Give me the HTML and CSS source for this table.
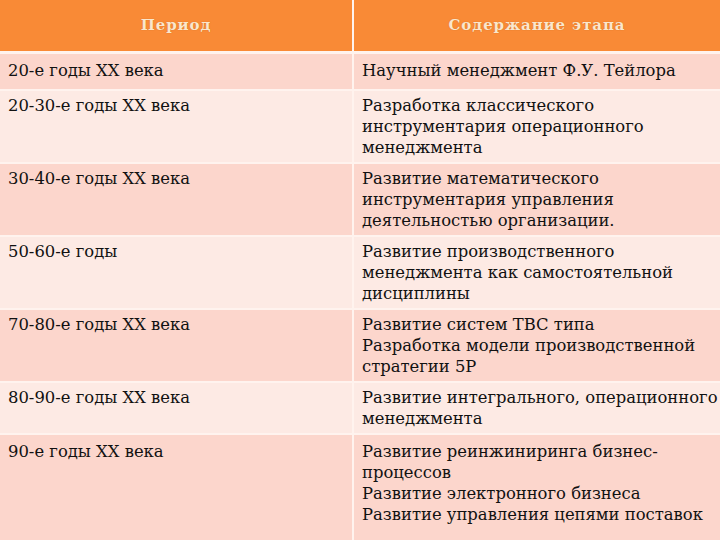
FILE: index.html
```html
<!DOCTYPE html>
<html>
<head>
<meta charset="utf-8">
<link rel="stylesheet" href="styles.css">
</head>
<body>
<div class="table">
  <div class="head">Период</div>
  <div class="head">Содержание этапа</div>

  <div class="cell odd short">20-е годы XX века</div>
  <div class="cell odd short">Научный менеджмент Ф.У. Тейлора</div>

  <div class="cell even">20-30-е годы XX века</div>
  <div class="cell even">Разработка классического<br>инструментария операционного<br>менеджмента</div>

  <div class="cell odd">30-40-е годы XX века</div>
  <div class="cell odd">Развитие математического<br>инструментария управления<br>деятельностью организации.</div>

  <div class="cell even">50-60-е годы</div>
  <div class="cell even">Развитие производственного<br>менеджмента как самостоятельной<br>дисциплины</div>

  <div class="cell odd">70-80-е годы XX века</div>
  <div class="cell odd">Развитие систем TBC типа<br>Разработка модели производственной<br>стратегии 5P</div>

  <div class="cell even">80-90-е годы XX века</div>
  <div class="cell even">Развитие интегрального, операционного<br>менеджмента</div>

  <div class="cell odd last">90-е годы XX века</div>
  <div class="cell odd last">Развитие реинжиниринга бизнес-<br>процессов<br>Развитие электронного бизнеса<br>Развитие управления цепями поставок</div>
</div>
</body>
</html>
```

FILE: styles.css
```css
html, body {
  margin: 0;
  padding: 0;
  background: #fff6f2;
}
body {
  width: 720px;
  height: 540px;
  overflow: hidden;
}
.table {
  display: grid;
  grid-template-columns: 352px 1fr;
  column-gap: 2px;
  row-gap: 2px;
  background: #fff3ee;
  font-family: "DejaVu Serif", serif;
  font-size: 16.4px;
  line-height: 21px;
  color: #111;
}
.head {
  background: #f98a36;
  height: 51px;
  display: flex;
  align-items: center;
  justify-content: center;
  color: #fbe6cc;
  font-weight: bold;
  font-size: 15px;
  letter-spacing: 0.9px;
  text-shadow: 0 0 1px #c2651e;
  margin-bottom: 1px;
}
.cell {
  padding: 4px 0 4px 8px;
  white-space: nowrap;
}
.cell.short { height: 25px; padding-top: 6px; padding-bottom: 4px; }
.cell.last { height: 110px; padding-top: 6px; }
.odd { background: #fcd6cc; }
.even { background: #fdeae4; }
```
